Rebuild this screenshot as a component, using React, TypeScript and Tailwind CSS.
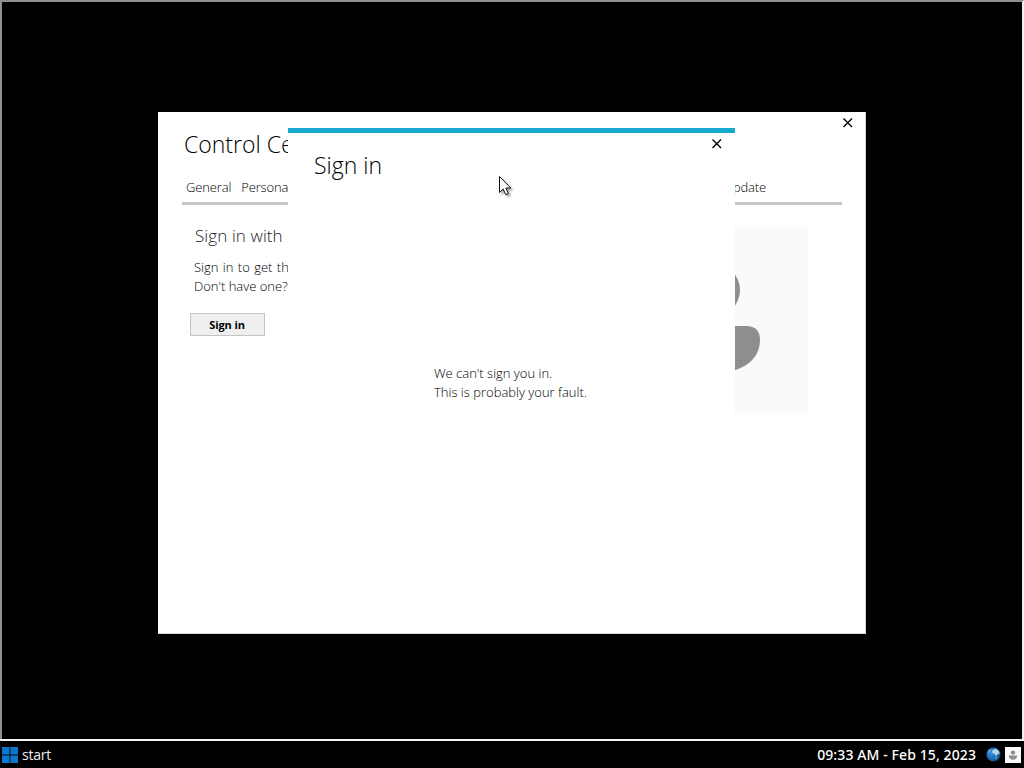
import React from 'react';

const CloseIcon: React.FC = () => (
  <svg width="10" height="10" viewBox="0 0 10 10" fill="none" stroke="#000" strokeWidth="1.4">
    <path d="M0.5 0.5 L9 9 M9 0.5 L0.5 9" />
  </svg>
);

const WindowsLogo: React.FC = () => (
  <svg width="16" height="16" viewBox="0 0 16 16" fill="#0b78d0">
    <path d="M0 0h7.6v7.6H0z M8.4 0H16v7.6H8.4z M0 8.4h7.6V16H0z M8.4 8.4H16V16H8.4z" />
  </svg>
);

const GlobeIcon: React.FC = () => (
  <svg width="15" height="15" viewBox="0 0 15 15">
    <defs>
      <radialGradient id="globe" cx="35%" cy="35%" r="80%">
        <stop offset="0" stopColor="#3f93e0" />
        <stop offset="0.6" stopColor="#1d66b4" />
        <stop offset="1" stopColor="#0c3a78" />
      </radialGradient>
    </defs>
    <circle cx="7.5" cy="7.5" r="7" fill="url(#globe)" />
    <path d="M6.400 3.400 L9.500 1.800 L12.800 4 L13.600 7 L11.600 6.800 L10.600 9.200 L8.400 7 L6 5.600z" fill="#b4d6e2" />
    <path d="M2.200 4 L4.500 2 L4.200 4.200 L2.400 5.800z" fill="#6fb0e4" />
    <path d="M9 9.800 L11.200 10 L10.200 12.400 L9 11.600z" fill="#5fa0cc" />
  </svg>
);

const TrayUserIcon: React.FC = () => (
  <svg width="16" height="16" viewBox="0 0 16 16">
    <path d="M0 0h16v16H0z" fill="#fafafa" />
    <circle cx="8" cy="5.6" r="2.200" fill="#8e8e8e" />
    <path d="M3.800 8.600h8.400c0 2.700-1.500 4.200-4.200 4.200s-4.200-1.500-4.200-4.200z" fill="#8e8e8e" />
  </svg>
);

const Avatar: React.FC = () => (
  <svg width="190" height="190" viewBox="0 0 190 190">
    <path d="M0 0h190v190H0z" fill="#fafafa" />
    <circle cx="95" cy="65" r="27" fill="#8e8e8e" />
    <path d="M62 101h66q14 0 14 14c0 18-15 33-47 33s-47-15-47-33q0-14 14-14z" fill="#8e8e8e" />
  </svg>
);

const Cursor: React.FC = () => (
  <svg width="18" height="24" viewBox="0 0 18 24" className="drop-shadow-[2px_2px_1px_rgba(0,0,0,0.35)]">
    <path
      d="M1.500 1.500 V17.500 L5.200 14 L7.700 19.700 L10.300 18.600 L7.900 13 H12.800z"
      fill="#fff"
      stroke="#111"
      strokeWidth="1"
    />
  </svg>
);

const ControlCenter: React.FC = () => (
  <section className="absolute left-[158px] top-[112px] flex h-[522px] w-[708px] flex-col border-b border-r border-[#cfdbd5] bg-white pl-6 pr-[23px]">
    <div className="flex h-12 justify-between">
      <h1 className="pl-0.5 pt-4 text-[23px] font-light leading-8 text-black">Control Center</h1>
      <button className="mr-[-11px] mt-[6px] h-[10px]" aria-label="Close">
        <CloseIcon />
      </button>
    </div>
    <nav className="mt-4 flex h-[29px] items-start justify-between border-b-[3px] border-[#c6c6c6] pl-1 pr-[76px] text-[13px] font-light leading-[22px] tracking-[-0.15px]">
      <div className="flex gap-[10px]">
        <span>General</span>
        <span>Personalization</span>
      </div>
      <span>Update</span>
    </nav>
    <div className="flex justify-between pl-2 pr-[34px]">
      <div className="flex flex-col items-start">
        <h2 className="pl-[5px] pt-[17px] text-[17px] font-light leading-7 tracking-[0.1px] text-[#222]">Sign in with</h2>
        <p className="pl-1 pt-2 text-[13px] font-light leading-[19px]">
          <span className="[word-spacing:1px]">Sign in to get the</span>
          <br />
          Don't have one?
        </p>
        <button className="mt-[17px] h-[23px] w-[75px] border border-[#c4c4c4] bg-[#efefef] pr-px pt-px text-[11px] font-bold tracking-[-0.1px]">
          Sign in
        </button>
      </div>
      <div className="pt-[20px]">
        <Avatar />
      </div>
    </div>
  </section>
);

const SignInDialog: React.FC = () => (
  <section className="absolute left-[288px] top-[128px] flex h-[445px] w-[447px] flex-col border-t-[5px] border-[#16a9cd] bg-white">
    <div className="flex justify-between pl-[26px] pr-[13px]">
      <h1 className="pt-4 text-[23px] font-light leading-8 text-black">Sign in</h1>
      <button className="mt-[6px] h-[10px]" aria-label="Close">
        <CloseIcon />
      </button>
    </div>
    <p className="pl-[146px] pt-[183px] text-[13px] font-light leading-[19px]">
      We can't sign you in.
      <br />
      This is probably your fault.
    </p>
  </section>
);

const Taskbar: React.FC = () => (
  <footer className="flex h-[29px] items-center justify-between border-t-2 border-[#f5f5f0] bg-black pl-0.5 pr-[3px] text-white">
    <div className="flex items-center gap-1">
      <WindowsLogo />
      <span className="text-[14px] leading-5 tracking-[-0.2px] text-[#eee]">start</span>
    </div>
    <div className="flex items-center">
      <span className="mr-[10px] font-['Noto_Sans','Open_Sans',sans-serif] text-[14px] font-medium leading-5 tracking-[0.1px]">
        09:33 AM - Feb 15, 2023
      </span>
      <GlobeIcon />
      <span className="ml-1">
        <TrayUserIcon />
      </span>
    </div>
  </footer>
);

export default function App() {
  return (
    <div className="flex h-[768px] w-[1024px] flex-col overflow-hidden bg-black font-['Open_Sans',sans-serif] text-black">
      <main className="relative flex-1 border-2 border-b-0 border-l-[#8f8f8f] border-r-[#f0f0f0] border-t-[#8f8f8f]">
        <div className="absolute -left-0.5 -top-0.5">
          <ControlCenter />
          <SignInDialog />
          <div className="absolute left-[498px] top-[175px]">
            <Cursor />
          </div>
        </div>
      </main>
      <Taskbar />
    </div>
  );
}
